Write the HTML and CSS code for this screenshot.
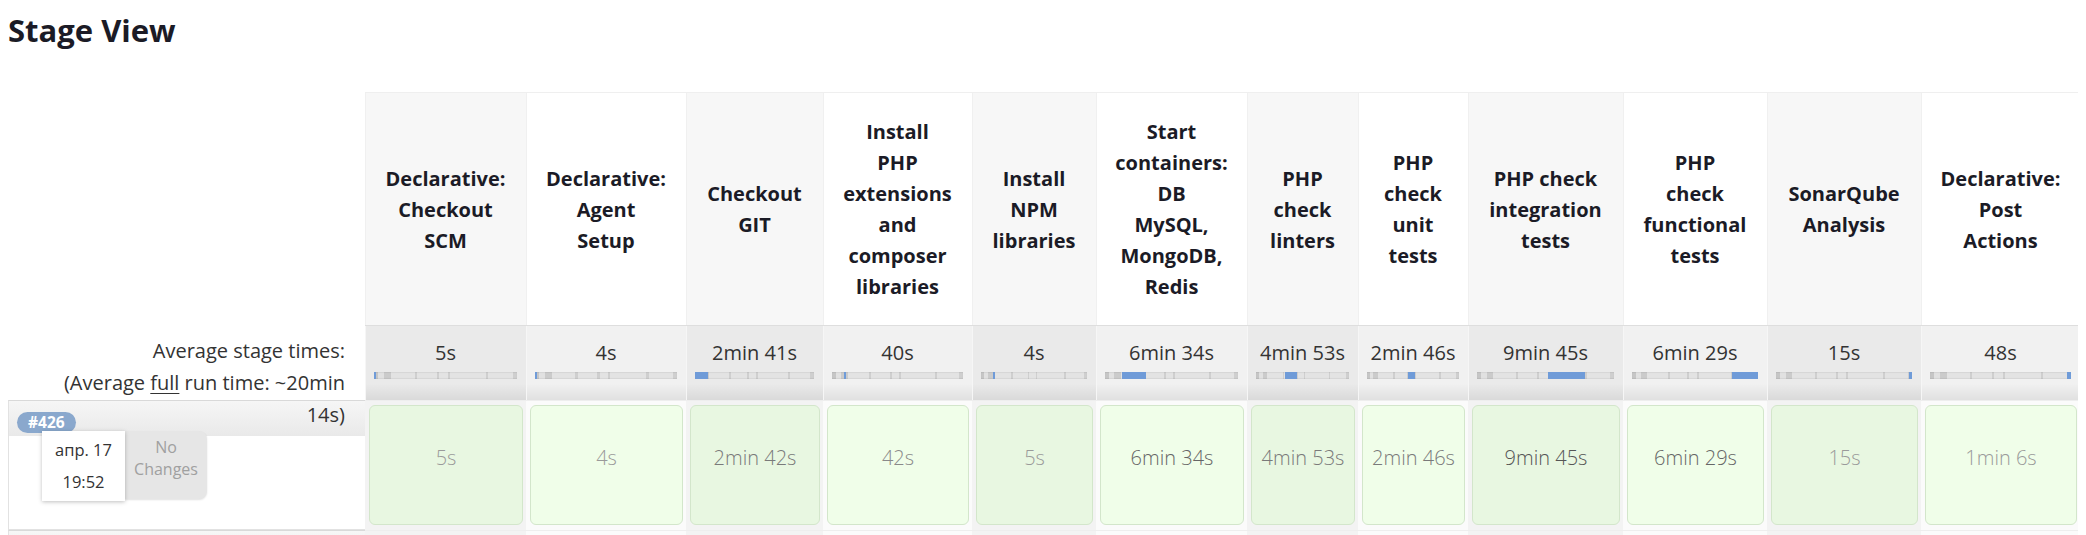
FILE: index.html
```html
<!DOCTYPE html>
<html>
<head>
<meta charset="utf-8">
<title>Stage View</title>
<link rel="stylesheet" href="styles.css">
</head>
<body>
<h2 class="title">Stage View</h2>
<div class="stage-table">
  <div class="corner"></div>
  <div class="head odd"><span>Declarative:<br>Checkout<br>SCM</span></div>
  <div class="head even"><span>Declarative:<br>Agent<br>Setup</span></div>
  <div class="head odd"><span>Checkout<br>GIT</span></div>
  <div class="head even"><span>Install<br>PHP<br>extensions<br>and<br>composer<br>libraries</span></div>
  <div class="head odd"><span>Install<br>NPM<br>libraries</span></div>
  <div class="head even"><span>Start<br>containers:<br>DB<br>MySQL,<br>MongoDB,<br>Redis</span></div>
  <div class="head odd"><span>PHP<br>check<br>linters</span></div>
  <div class="head even"><span>PHP<br>check<br>unit<br>tests</span></div>
  <div class="head odd"><span>PHP check<br>integration<br>tests</span></div>
  <div class="head even"><span>PHP<br>check<br>functional<br>tests</span></div>
  <div class="head odd"><span>SonarQube<br>Analysis</span></div>
  <div class="head even"><span>Declarative:<br>Post<br>Actions</span></div>

  <div class="avg-label">Average stage times:<br>(Average <u>full</u> run time: ~20min<br>14s)</div>
  <div class="avg odd"><div class="avg-time">5s</div><div class="bar"><div class="bar-fill" style="margin-left:0%;width:1%"></div></div></div>
  <div class="avg even"><div class="avg-time">4s</div><div class="bar"><div class="bar-fill" style="margin-left:0%;width:1.5%"></div></div></div>
  <div class="avg odd"><div class="avg-time">2min 41s</div><div class="bar"><div class="bar-fill" style="margin-left:0%;width:11%"></div></div></div>
  <div class="avg even"><div class="avg-time">40s</div><div class="bar"><div class="bar-fill" style="margin-left:9.5%;width:1.5%"></div></div></div>
  <div class="avg odd"><div class="avg-time">4s</div><div class="bar"><div class="bar-fill" style="margin-left:11.5%;width:1.5%"></div></div></div>
  <div class="avg even"><div class="avg-time">6min 34s</div><div class="bar"><div class="bar-fill" style="margin-left:12.7%;width:18%"></div></div></div>
  <div class="avg odd"><div class="avg-time">4min 53s</div><div class="bar"><div class="bar-fill" style="margin-left:31.5%;width:13%"></div></div></div>
  <div class="avg even"><div class="avg-time">2min 46s</div><div class="bar"><div class="bar-fill" style="margin-left:44.5%;width:7.5%"></div></div></div>
  <div class="avg odd"><div class="avg-time">9min 45s</div><div class="bar"><div class="bar-fill" style="margin-left:51.5%;width:27%"></div></div></div>
  <div class="avg even"><div class="avg-time">6min 29s</div><div class="bar"><div class="bar-fill" style="margin-left:79%;width:21%"></div></div></div>
  <div class="avg odd"><div class="avg-time">15s</div><div class="bar"><div class="bar-fill" style="margin-left:98%;width:2%"></div></div></div>
  <div class="avg even"><div class="avg-time">48s</div><div class="bar"><div class="bar-fill" style="margin-left:97.5%;width:2.5%"></div></div></div>

  <div class="build">
    <span class="badge">#426</span>
    <div class="build-meta">
      <div class="date">апр. 17<br>19:52</div>
      <div class="changes">No<br>Changes</div>
    </div>
  </div>
  <div class="run odd"><div class="box t1">5s</div></div>
  <div class="run even"><div class="box t1">4s</div></div>
  <div class="run odd"><div class="box t3">2min 42s</div></div>
  <div class="run even"><div class="box t2">42s</div></div>
  <div class="run odd"><div class="box t1">5s</div></div>
  <div class="run even"><div class="box t4">6min 34s</div></div>
  <div class="run odd"><div class="box t3">4min 53s</div></div>
  <div class="run even"><div class="box t3">2min 46s</div></div>
  <div class="run odd"><div class="box t5">9min 45s</div></div>
  <div class="run even"><div class="box t4">6min 29s</div></div>
  <div class="run odd"><div class="box t1">15s</div></div>
  <div class="run even"><div class="box t1">1min 6s</div></div>

  <div class="build"></div>
  <div class="run odd"><div class="box t1">&nbsp;</div></div>
  <div class="run even"><div class="box t1">&nbsp;</div></div>
  <div class="run odd"><div class="box t1">&nbsp;</div></div>
  <div class="run even"><div class="box t1">&nbsp;</div></div>
  <div class="run odd"><div class="box t1">&nbsp;</div></div>
  <div class="run even empty"></div>
  <div class="run odd empty"></div>
  <div class="run even empty"></div>
  <div class="run odd empty"></div>
  <div class="run even empty"></div>
  <div class="run odd"><div class="box t1">&nbsp;</div></div>
  <div class="run even"><div class="box t1">&nbsp;</div></div>
</div>
</body>
</html>
```
FILE: styles.css
```css
html {
  overflow: hidden;
}

body {
  margin: 8px;
  background: #ffffff;
  color: #333333;
  font-family: "Open Sans", "Noto Sans", "Liberation Sans", sans-serif;
}

.title {
  margin: 0 0 40px;
  font-size: 31px;
  line-height: 44px;
  font-weight: 700;
  color: #1b1b26;
}

.stage-table {
  display: grid;
  grid-template-columns: 357px 161px 160px 137px 149px 124px 151px 111px 110px 155px 144px 154px 159px;
  grid-template-rows: 233px 75px 130px 130px;
}

.corner {
  background: #ffffff;
}

.head {
  display: flex;
  align-items: center;
  justify-content: center;
  text-align: center;
  font-size: 20px;
  line-height: 31px;
  font-weight: 700;
  color: #1b1b26;
  border-top: 1px solid #efefef;
  box-shadow: inset 1px 0 0 #f0f0f0;
}

.head.odd {
  background: #f7f7f7;
}

.head.even {
  background: #ffffff;
}

.avg-label {
  position: relative;
  z-index: 1;
  padding: 10px 20px 0 0;
  text-align: right;
  white-space: nowrap;
  font-size: 20px;
  line-height: 32px;
  color: #333333;
}

.avg-label u {
  text-decoration-thickness: 1px;
  text-underline-offset: 3px;
}

.avg {
  padding: 13px 9px 0;
  border-top: 1px solid #dedede;
  box-shadow: inset 1px 0 0 #f6f6f6;
  background-image: linear-gradient(to bottom, rgba(0, 0, 0, 0) 78%, rgba(0, 0, 0, 0.07) 100%);
}

.avg.odd {
  background-color: #eaeaea;
}

.avg.even {
  background-color: #f1f1f1;
}

.avg-time {
  text-align: center;
  font-size: 20px;
  line-height: 27px;
  color: #333333;
}

.bar {
  display: flex;
  height: 7px;
  margin-top: 6px;
  background: linear-gradient(to right,
    #c6c6c6 0%, #c6c6c6 3%,
    #e1e1e1 3%, #e1e1e1 7%,
    #cbcbcb 7%, #cbcbcb 12%,
    #e3e3e3 12%, #e3e3e3 28.5%,
    #cfcfcf 28.5%, #cfcfcf 30%,
    #e3e3e3 30%, #e3e3e3 44%,
    #cfcfcf 44%, #cfcfcf 45.5%,
    #e3e3e3 45.5%, #e3e3e3 51.5%,
    #cfcfcf 51.5%, #cfcfcf 53%,
    #e3e3e3 53%, #e3e3e3 78.5%,
    #cfcfcf 78.5%, #cfcfcf 80%,
    #e3e3e3 80%, #e3e3e3 97%,
    #cfcfcf 97%, #cfcfcf 100%);
  box-shadow: inset 0 1px 1px rgba(0, 0, 0, 0.06), inset 0 -1px 1px rgba(0, 0, 0, 0.06);
}

.bar-fill {
  height: 100%;
  min-width: 2px;
  background: #6f9bd8;
}

.build {
  border: 1px solid #e2e2e2;
  border-right: none;
  border-top-color: #d9d9d9;
  padding: 10px 0 0 8px;
  background: #ffffff linear-gradient(to bottom, #f6f6f6, #e9e9e9) 0 0 / 100% 35px no-repeat;
}

.badge {
  display: inline-block;
  height: 21px;
  padding: 0 11px;
  border-radius: 11px;
  background: #8aa8cd;
  color: #ffffff;
  font-size: 15.5px;
  line-height: 21px;
  font-weight: 700;
}

.build-meta {
  display: flex;
  margin: -2px 0 0 25px;
}

.date {
  position: relative;
  z-index: 1;
  width: 83px;
  height: 70px;
  padding-top: 3px;
  box-sizing: border-box;
  background: #ffffff;
  box-shadow: 0 1px 4px rgba(0, 0, 0, 0.25);
  text-align: center;
  font-size: 16.5px;
  line-height: 32px;
  color: #333333;
}

.changes {
  width: 82px;
  height: 68px;
  padding-top: 5px;
  box-sizing: border-box;
  background: #e6e6e6;
  border-radius: 0 8px 8px 0;
  box-shadow: 0 1px 2px rgba(0, 0, 0, 0.12);
  text-align: center;
  font-size: 16px;
  line-height: 22px;
  color: #a0a0a0;
}

.run {
  padding: 4px 3px 5px 4px;
  border-top: 1px solid #eeeeee;
}

.run.odd {
  background: #f3f3f3;
}

.run.even {
  background: #fbfbfb;
}

.box {
  display: flex;
  align-items: center;
  justify-content: center;
  height: 100%;
  box-sizing: border-box;
  padding-bottom: 15px;
  border: 1px solid #d3e6cb;
  border-radius: 6px;
  font-size: 20px;
  font-weight: 300;
  white-space: nowrap;
}

.run.odd .box {
  background: #e8f7e1;
}

.run.even .box {
  background: #f0fee9;
}

.t1 { color: #9a9a9a; }
.t2 { color: #8a8a8a; }
.t3 { color: #7a7a7a; }
.t4 { color: #666666; }
.t5 { color: #555555; }
```
